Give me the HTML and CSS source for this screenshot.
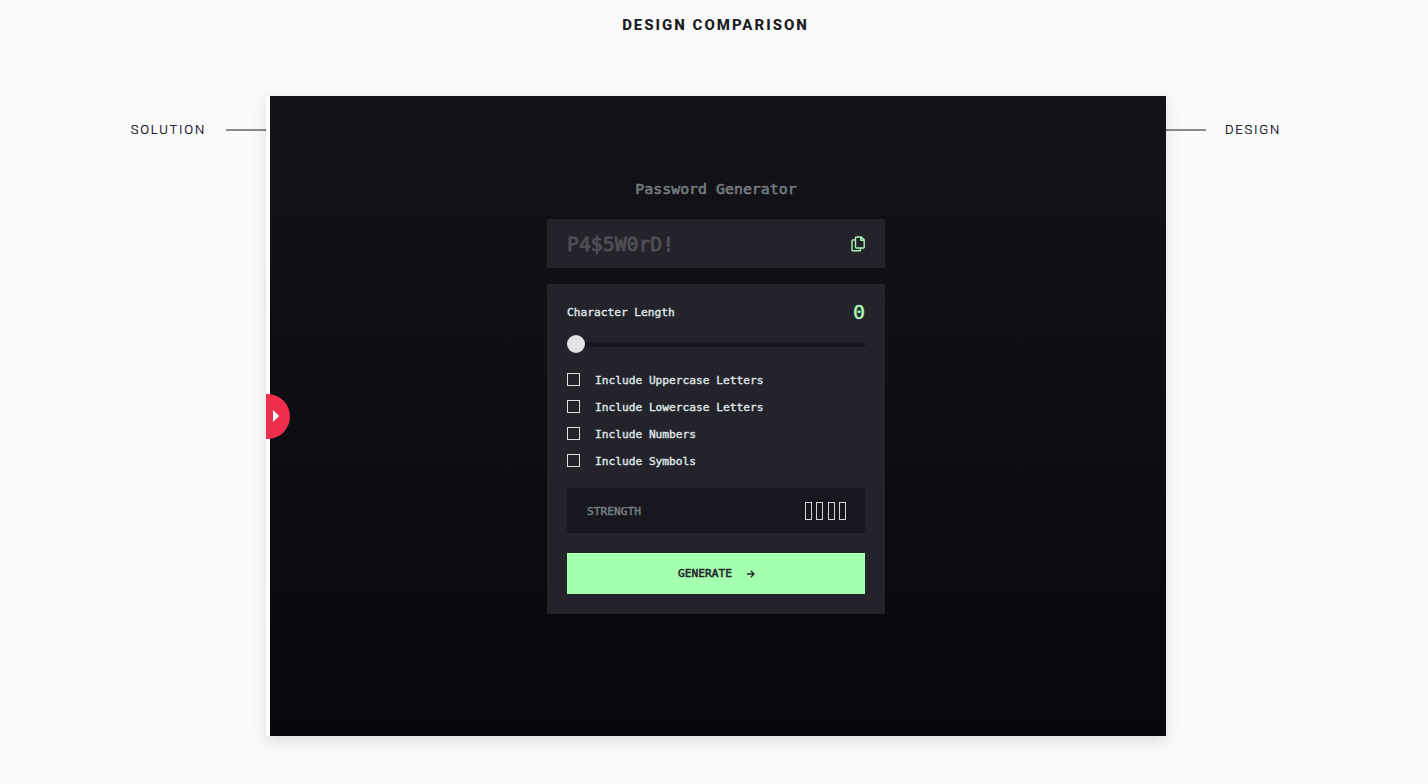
FILE: index.html
```html
<!DOCTYPE html>
<html lang="en">
<head>
<meta charset="utf-8">
<title>Design Comparison</title>
<link rel="stylesheet" href="styles.css">
</head>
<body>
<h1 class="page-title">DESIGN COMPARISON</h1>
<main class="comparison">
  <div class="side side-left"><span class="side-label">SOLUTION</span><span class="side-line"></span></div>
  <section class="frame">
    <div class="handle"><svg width="6" height="12" viewBox="0 0 6 12"><path d="M0 0L6 6L0 12Z" fill="#fff"/></svg></div>
    <div class="generator">
      <h2 class="app-title">Password Generator</h2>
      <div class="password">
        <span class="password-text">P4$5W0rD!</span>
        <svg class="copy" width="14" height="16" viewBox="0 0 14 16" fill="none" stroke="#a9f5b4" stroke-width="1.4" stroke-linejoin="round"><path d="M4.5 4H1.7Q1 4 1 4.7V14Q1 14.8 1.7 14.8H8.8Q9.5 14.8 9.5 14V12.2M5.2 1H10.3L13.2 3.8V11.3Q13.2 12 12.5 12H5.2Q4.5 12 4.5 11.3V1.7Q4.5 1 5.2 1ZM9.8 1V4.3H13"/></svg>
      </div>
      <div class="panel">
        <div class="length"><span class="label">Character Length</span><span class="length-value">0</span></div>
        <div class="slider"><span class="thumb"></span></div>
        <ul class="options">
          <li class="option"><span class="box"></span><span class="label">Include Uppercase Letters</span></li>
          <li class="option"><span class="box"></span><span class="label">Include Lowercase Letters</span></li>
          <li class="option"><span class="box"></span><span class="label">Include Numbers</span></li>
          <li class="option"><span class="box"></span><span class="label">Include Symbols</span></li>
        </ul>
        <div class="strength">
          <span class="label strength-label">STRENGTH</span>
          <span class="bars"><i class="bar"></i><i class="bar"></i><i class="bar"></i><i class="bar"></i></span>
        </div>
        <button class="generate" type="button"><span>GENERATE</span><svg width="8" height="8" viewBox="0 0 8 8" fill="none" stroke="#24232c" stroke-width="1.3"><path d="M0 4H7M3.8 .8L7 4L3.8 7.2"/></svg></button>
      </div>
    </div>
  </section>
  <div class="side side-right"><span class="side-line"></span><span class="side-label">DESIGN</span></div>
</main>
</body>
</html>
```
FILE: styles.css
```css
* { box-sizing: border-box; }
body {
  margin: 0;
  height: 784px;
  overflow: hidden;
  background: #fafafa;
  color: #1b1b22;
  font-family: Roboto, sans-serif;
}
.page-title {
  margin: 0;
  padding: 15px 0 0 3px;
  height: 96px;
  font-size: 15px;
  line-height: 20px;
  font-weight: 800;
  letter-spacing: 2px;
  text-align: center;
}
.comparison {
  display: grid;
  grid-template-columns: 266px 900px 262px;
}
.side {
  display: flex;
  align-items: center;
  height: 68px;
}
.side-left { justify-content: flex-end; gap: 20px; }
.side-right { gap: 19px; }
.side-label {
  font-size: 13px;
  line-height: 16px;
  font-weight: 300;
  letter-spacing: 1.8px;
  color: #000010;
  -webkit-text-stroke: .2px;
}
.side-line { width: 40px; height: 2px; background: #8b8b8b; }
.frame {
  position: relative;
  height: 640px;
  border-left: 4px solid #fff;
  background: linear-gradient(#14131a, #08070b);
  box-shadow: 0 5px 16px rgba(0, 0, 0, .12);
  padding: 83px 281px 0 277px;
}
.handle {
  position: absolute;
  left: -4px;
  top: 298px;
  width: 24px;
  height: 45px;
  border-radius: 0 23px 23px 0;
  background: #ef2d4c;
  display: flex;
  align-items: center;
  padding: 0 0 1px 7px;
}
.handle svg { display: block; }
.generator {
  width: 338px;
  font-family: "DejaVu Sans Mono", monospace;
  color: #dfe3e4;
}
.app-title {
  margin: 0 0 20px;
  font-size: 14.9px;
  line-height: 20px;
  font-weight: 400;
  text-align: center;
  color: #747b7e;
  -webkit-text-stroke: .6px;
}
.password {
  display: flex;
  justify-content: space-between;
  align-items: center;
  height: 49px;
  padding: 0 20px;
  background: #24232c;
  margin-bottom: 16px;
}
.password-text {
  font-size: 19.8px;
  line-height: 26px;
  padding-top: 2px;
  color: #4e4f55;
  -webkit-text-stroke: .8px;
}
.panel {
  height: 330px;
  padding: 15px 20px 20px;
  background: #24232c;
}
.length {
  display: flex;
  align-items: center;
  justify-content: space-between;
  height: 26px;
}
.label {
  padding-top: 2px;
  font-size: 11.2px;
  line-height: 16px;
  -webkit-text-stroke: .4px;
}
.length-value {
  font-size: 20px;
  line-height: 26px;
  color: #b0f8ba;
  -webkit-text-stroke: .4px;
}
.slider {
  display: flex;
  align-items: center;
  height: 18px;
  margin-top: 10px;
  background: linear-gradient(#18171f, #18171f) center / 100% 5px no-repeat;
}
.thumb { width: 18px; height: 18px; border-radius: 50%; background: #e3e2e9; }
.options {
  list-style: none;
  margin: 19px 0 0;
  padding: 0;
  display: grid;
  gap: 11px;
}
.option { display: flex; gap: 15px; height: 16px; align-items: center; }
.box { width: 13px; height: 13px; border: 1px solid #dcdfdf; margin-bottom: 2px; }
.strength {
  display: flex;
  align-items: center;
  justify-content: space-between;
  height: 45px;
  margin-top: 19px;
  padding: 0 19px 0 20px;
  background: #18171f;
}
.strength-label { color: #747c7f; -webkit-text-stroke: .5px; }
.bars { display: flex; gap: 4.3px; }
.bar { width: 7px; height: 18px; border: 1.4px solid #d0d6d5; }
.generate {
  display: flex;
  align-items: center;
  justify-content: center;
  gap: 15px;
  width: 100%;
  height: 41px;
  margin-top: 20px;
  padding: 0 0 0 1px;
  border: 0;
  background: #a4ffaf;
  color: #24232c;
  font: 11.2px/16px "DejaVu Sans Mono", monospace;
  -webkit-text-stroke: .5px;
}
```
